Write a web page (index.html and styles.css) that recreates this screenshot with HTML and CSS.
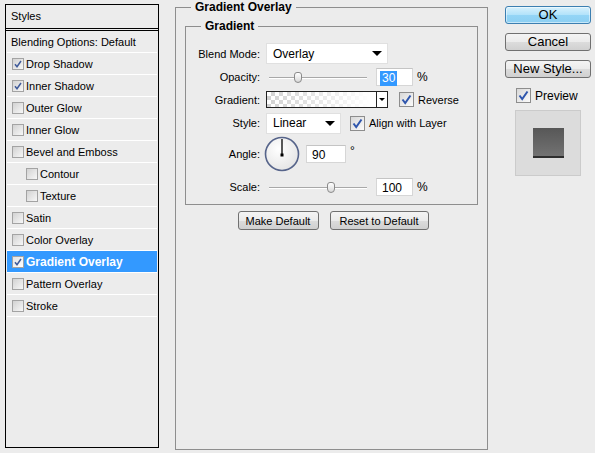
FILE: index.html
```html
<!DOCTYPE html>
<html lang="en">
<head>
  <meta charset="UTF-8">
  <title>Layer Style</title>
  <link rel="stylesheet" href="styles.css">
</head>
<body>
<div class="dialog">

  <div class="styles-panel">
    <div class="panel-head">Styles</div>
    <ul class="style-list">
      <li class="style-item">Blending Options: Default</li>
      <li class="style-item"><span class="cb"><svg viewBox="0 0 10 10"><path d="M2 5.2 L4 7.8 L8 2"/></svg></span>Drop Shadow</li>
      <li class="style-item"><span class="cb"><svg viewBox="0 0 10 10"><path d="M2 5.2 L4 7.8 L8 2"/></svg></span>Inner Shadow</li>
      <li class="style-item"><span class="cb"></span>Outer Glow</li>
      <li class="style-item"><span class="cb"></span>Inner Glow</li>
      <li class="style-item"><span class="cb"></span>Bevel and Emboss</li>
      <li class="style-item sub"><span class="cb"></span>Contour</li>
      <li class="style-item sub"><span class="cb"></span>Texture</li>
      <li class="style-item"><span class="cb"></span>Satin</li>
      <li class="style-item"><span class="cb"></span>Color Overlay</li>
      <li class="style-item selected"><span class="cb"><svg viewBox="0 0 10 10"><path d="M2 5.2 L4 7.8 L8 2"/></svg></span>Gradient Overlay</li>
      <li class="style-item"><span class="cb"></span>Pattern Overlay</li>
      <li class="style-item"><span class="cb"></span>Stroke</li>
    </ul>
  </div>

  <fieldset class="group outer">
    <legend>Gradient Overlay</legend>

    <fieldset class="group inner">
      <legend>Gradient</legend>

      <div class="row row-blend">
        <span class="lbl">Blend Mode:</span>
        <div class="select select-wide">Overlay<span class="arrow"></span></div>
      </div>

      <div class="row">
        <span class="lbl">Opacity:</span>
        <div class="slider"><span class="thumb" style="left: 25px"></span></div>
        <div class="num"><span class="sel-text">30</span></div>
        <span class="unit">%</span>
      </div>

      <div class="row">
        <span class="lbl">Gradient:</span>
        <div class="swatch">
          <span class="swatch-fill"></span>
          <span class="swatch-drop"><span class="mini-arrow"></span></span>
        </div>
        <span class="cb-lg cb-gap"><svg viewBox="0 0 13 13"><path d="M2.5 6.5 L5.2 10 L10.5 2.5"/></svg></span>
        <span class="cb-text">Reverse</span>
      </div>

      <div class="row row-style">
        <span class="lbl">Style:</span>
        <div class="select select-short">Linear<span class="arrow"></span></div>
        <span class="cb-lg cb-gap-sm"><svg viewBox="0 0 13 13"><path d="M2.5 6.5 L5.2 10 L10.5 2.5"/></svg></span>
        <span class="cb-text">Align with Layer</span>
      </div>

      <div class="row row-angle">
        <span class="lbl">Angle:</span>
        <svg class="dial" viewBox="0 0 36 36">
          <defs>
            <radialGradient id="dialFill" cx="40%" cy="35%" r="70%">
              <stop offset="0" stop-color="#ffffff"/>
              <stop offset="1" stop-color="#e4e4e4"/>
            </radialGradient>
          </defs>
          <circle cx="18" cy="18" r="16.5" fill="url(#dialFill)" stroke="#56648a" stroke-width="1.6"/>
          <line x1="18" y1="19" x2="18" y2="3" stroke="#000" stroke-width="1.3"/>
          <rect x="16.5" y="17.5" width="3" height="3" fill="#000"/>
        </svg>
        <div class="num num-angle">90</div>
        <span class="deg">°</span>
      </div>

      <div class="row row-scale">
        <span class="lbl">Scale:</span>
        <div class="slider"><span class="thumb" style="left: 58px"></span></div>
        <div class="num num-scale">100</div>
        <span class="unit">%</span>
      </div>
    </fieldset>

    <div class="defaults">
      <button class="btn btn-make">Make Default</button>
      <button class="btn btn-reset">Reset to Default</button>
    </div>
  </fieldset>

  <div class="actions">
    <button class="btn btn-side btn-ok">OK</button>
    <button class="btn btn-side">Cancel</button>
    <button class="btn btn-side">New Style...</button>
    <div class="preview-check">
      <span class="cb-lg"><svg viewBox="0 0 13 13"><path d="M2.5 6.5 L5.2 10 L10.5 2.5"/></svg></span>
      <span class="cb-text">Preview</span>
    </div>
    <div class="preview-box">
      <div class="preview-square"></div>
    </div>
  </div>

</div>
</body>
</html>
```

FILE: styles.css
```css
body {
  margin: 0;
  background: #ececec;
  font-family: 'Liberation Sans', Arial, sans-serif;
  font-size: 11px;
  color: #000;
}

.dialog {
  display: flex;
  align-items: flex-start;
  height: 453px;
  padding-left: 5px;
  box-sizing: border-box;
}

/* left list of styles */

.styles-panel {
  width: 154px;
  height: 444px;
  margin-top: 4px;
  box-sizing: border-box;
  border: 1px solid #000;
}

.panel-head {
  height: 23px;
  line-height: 23px;
  padding-left: 5px;
  border-bottom: 3px double #000;
}

.style-list {
  list-style: none;
  margin: 0;
  padding: 0 1px;
}

.style-item {
  display: flex;
  align-items: center;
  height: 21px;
  padding-left: 4px;
  border-bottom: 1px solid #fff;
  white-space: nowrap;
}

.style-item.sub {
  padding-left: 18px;
}

.style-item.selected {
  background: #3399ff;
  color: #fff;
  font-size: 12px;
  font-weight: bold;
}

.cb {
  display: inline-block;
  flex: none;
  width: 12px;
  height: 12px;
  margin: 0 2px 0 1px;
  box-sizing: border-box;
  border: 1px solid #a3a3a3;
  background: linear-gradient(135deg, #d2d2d2, #f7f7f7);
}

.cb svg {
  display: block;
  width: 10px;
  height: 10px;
}

.cb path {
  fill: none;
  stroke: #3f5a9a;
  stroke-width: 1.5;
}

.selected .cb {
  background: linear-gradient(135deg, #e4e4e4, #ffffff);
}

.cb-lg {
  display: inline-block;
  flex: none;
  width: 15px;
  height: 15px;
  box-sizing: border-box;
  border: 1px solid #8d8d8d;
  background: linear-gradient(135deg, #d8d8d8, #fbfbfb);
}

.cb-lg svg {
  display: block;
  width: 13px;
  height: 13px;
}

.cb-lg path {
  fill: none;
  stroke: #2f56ad;
  stroke-width: 2;
}

.cb-text {
  margin-left: 4px;
}

/* group boxes */

.group {
  margin: 0;
  padding: 0;
  border: 1px solid #8e8e8e;
  min-inline-size: 0;
}

.group > legend {
  margin-left: 15px;
  padding: 0 4px;
  font-size: 12px;
  font-weight: bold;
  line-height: 14px;
}

.outer {
  width: 313px;
  height: 450px;
  margin-left: 16px;
  box-sizing: border-box;
}

.inner {
  margin: 5px 9px 0;
  padding: 9px 0 4px;
}

.row {
  display: flex;
  align-items: center;
  height: 23px;
  white-space: nowrap;
}

.row-style {
  height: 24px;
}

.row-angle {
  height: 38px;
}

.row-scale {
  height: 27px;
}

.lbl {
  width: 74px;
  margin-right: 6px;
  text-align: right;
}

.select {
  display: flex;
  align-items: center;
  justify-content: space-between;
  height: 21px;
  padding: 0 5px 0 6px;
  box-sizing: border-box;
  background: #fff;
  border: 1px solid #e0e0e0;
  font-size: 12px;
}

.select-wide {
  width: 122px;
}

.select-short {
  width: 75px;
}

.arrow {
  width: 0;
  height: 0;
  border-left: 5px solid transparent;
  border-right: 5px solid transparent;
  border-top: 5px solid #000;
}

.slider {
  position: relative;
  width: 98px;
  height: 0;
  margin: 2px 9px 0 3px;
  border-top: 1px solid #a8a8a8;
  border-bottom: 1px solid #fff;
}

.thumb {
  position: absolute;
  top: -6px;
  width: 8px;
  height: 11px;
  box-sizing: border-box;
  border: 1px solid #8a8a8a;
  border-radius: 3px 3px 4px 4px;
  background: linear-gradient(#ffffff, #d9d9d9);
}

.num {
  width: 37px;
  height: 18px;
  line-height: 18px;
  padding-left: 3px;
  box-sizing: border-box;
  background: #fff;
  border: 1px solid #d6d6d6;
  border-top-color: #c4c4c4;
  font-size: 12px;
}

.num-scale {
  padding-left: 5px;
}

.num-angle {
  width: 40px;
  margin-left: 6px;
  padding-left: 5px;
}

.sel-text {
  display: inline-block;
  padding: 0 2px;
  line-height: 15px;
  background: #3399ff;
  color: #fff;
}

.unit {
  margin-left: 4px;
  font-size: 12px;
}

.deg {
  align-self: flex-start;
  margin: 9px 0 0 4px;
  font-size: 12px;
}

.dial {
  flex: none;
  width: 36px;
  height: 36px;
  margin-left: -2px;
}

.swatch {
  display: flex;
  width: 122px;
  height: 17px;
  box-sizing: border-box;
  border: 1px solid #222;
}

.swatch-fill {
  flex: 1;
  background:
    linear-gradient(to right, rgba(255, 255, 255, 0.1), #fff 95%),
    repeating-conic-gradient(#cdcdcd 0 25%, #fff 0 50%) 0 0 / 8px 8px;
}

.swatch-drop {
  display: flex;
  align-items: center;
  justify-content: center;
  width: 10px;
  border-left: 1px solid #222;
  background: #fff;
}

.mini-arrow {
  width: 0;
  height: 0;
  border-left: 3px solid transparent;
  border-right: 3px solid transparent;
  border-top: 3px solid #000;
}

.cb-gap {
  margin-left: 11px;
}

.cb-gap-sm {
  margin-left: 9px;
}

/* buttons */

.defaults {
  display: flex;
  justify-content: center;
  gap: 11px;
  margin-top: 6px;
  padding-left: 3px;
}

.btn {
  height: 19px;
  padding: 0;
  box-sizing: border-box;
  font-family: inherit;
  font-size: 11px;
  color: #000;
  border: 1px solid #707070;
  border-radius: 3px;
  background: linear-gradient(#f4f4f4, #ebebeb 50%, #dcdcdc 50%, #d0d0d0);
}

.btn-make {
  width: 81px;
}

.btn-reset {
  width: 99px;
}

.actions {
  display: flex;
  flex-direction: column;
  width: 86px;
  margin: 6px 0 0 17px;
}

.btn-side {
  flex: none;
  width: 86px;
  height: 18px;
  margin-bottom: 9px;
  font-size: 13px;
  line-height: 14px;
}

.btn-ok {
  border-color: #3c7fb1;
  background: linear-gradient(#d8f1fd, #b1e2fa 50%, #94d5f6 50%, #8ccff2);
  box-shadow: inset 0 0 0 1px rgba(255, 255, 255, 0.5);
}

.preview-check {
  display: flex;
  align-items: center;
  margin: 0 0 0 11px;
  height: 17px;
  font-size: 12px;
}

.preview-box {
  display: flex;
  flex: none;
  align-items: center;
  justify-content: center;
  width: 66px;
  height: 66px;
  margin: 6px 0 0 10px;
  box-sizing: border-box;
  background: #dcdcdc;
  border: 1px solid #cbcbcb;
}

.preview-square {
  width: 31px;
  height: 30px;
  margin-left: 1px;
  box-sizing: border-box;
  background: linear-gradient(#575757, #727272);
  border-bottom: 2px solid #2e2e2e;
}
```
